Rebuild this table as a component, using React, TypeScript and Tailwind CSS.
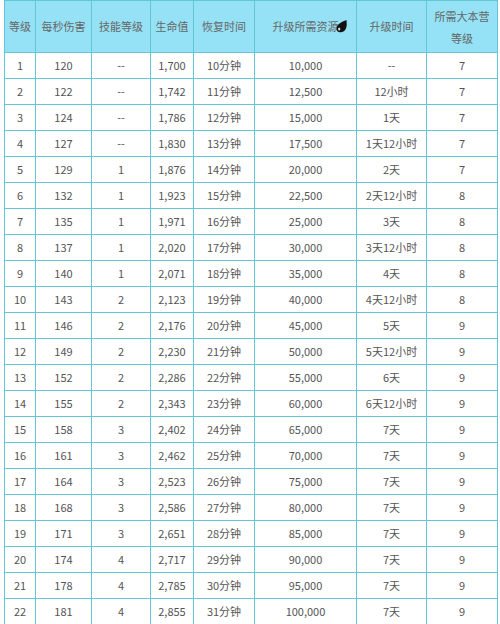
import React from "react";

type Row = [number, number, string, string, string, string, string, number];

const rows: Row[] = [
  [1, 120, "--", "1,700", "10分钟", "10,000", "--", 7],
  [2, 122, "--", "1,742", "11分钟", "12,500", "12小时", 7],
  [3, 124, "--", "1,786", "12分钟", "15,000", "1天", 7],
  [4, 127, "--", "1,830", "13分钟", "17,500", "1天12小时", 7],
  [5, 129, "1", "1,876", "14分钟", "20,000", "2天", 7],
  [6, 132, "1", "1,923", "15分钟", "22,500", "2天12小时", 8],
  [7, 135, "1", "1,971", "16分钟", "25,000", "3天", 8],
  [8, 137, "1", "2,020", "17分钟", "30,000", "3天12小时", 8],
  [9, 140, "1", "2,071", "18分钟", "35,000", "4天", 8],
  [10, 143, "2", "2,123", "19分钟", "40,000", "4天12小时", 8],
  [11, 146, "2", "2,176", "20分钟", "45,000", "5天", 9],
  [12, 149, "2", "2,230", "21分钟", "50,000", "5天12小时", 9],
  [13, 152, "2", "2,286", "22分钟", "55,000", "6天", 9],
  [14, 155, "2", "2,343", "23分钟", "60,000", "6天12小时", 9],
  [15, 158, "3", "2,402", "24分钟", "65,000", "7天", 9],
  [16, 161, "3", "2,462", "25分钟", "70,000", "7天", 9],
  [17, 164, "3", "2,523", "26分钟", "75,000", "7天", 9],
  [18, 168, "3", "2,586", "27分钟", "80,000", "7天", 9],
  [19, 171, "3", "2,651", "28分钟", "85,000", "7天", 9],
  [20, 174, "4", "2,717", "29分钟", "90,000", "7天", 9],
  [21, 178, "4", "2,785", "30分钟", "95,000", "7天", 9],
  [22, 181, "4", "2,855", "31分钟", "100,000", "7天", 9],
];

const widths = ["w-[31px]", "w-[56px]", "w-[59px]", "w-[43px]", "w-[61px]", "w-[102px]", "w-[70px]", "w-[71px]"];

function DarkElixir() {
  return (
    <svg width="13" height="14" viewBox="0 0 13 14" className="absolute -right-[9px] top-[1px]">
      <path d="M11.5 1 C9 2 2 4.5 1.5 9 C1.2 12 3.5 13.5 6 13.3 C9.5 13 11.5 10 11.7 6 C11.8 4 11.6 2.5 11.5 1 Z" fill="#111" />
      <ellipse cx="4.2" cy="10" rx="1.1" ry="1.6" fill="#ddd" />
    </svg>
  );
}

export default function App() {
  const cell = "border border-[#62c6d4] text-center p-0";
  return (
    <div className="w-[500px] h-[624px] overflow-hidden bg-white pl-[4px] font-['Noto_Sans_CJK_SC','Noto_Sans',sans-serif] text-[11px] text-[#555]">
      <table className="border-collapse table-fixed w-[494px]">
        <colgroup>
          {widths.map((w, i) => (
            <col key={i} className={w} />
          ))}
        </colgroup>
        <thead>
          <tr className="h-[52px] bg-[#95e2f6] text-[#666]">
            <th className={`${cell} font-normal`}>等级</th>
            <th className={`${cell} font-normal`}>每秒伤害</th>
            <th className={`${cell} font-normal`}>技能等级</th>
            <th className={`${cell} font-normal`}>生命值</th>
            <th className={`${cell} font-normal`}>恢复时间</th>
            <th className={`${cell} font-normal`}>
              <span className="relative">
                升级所需资源
                <DarkElixir />
              </span>
            </th>
            <th className={`${cell} font-normal`}>升级时间</th>
            <th className={`${cell} font-normal leading-[22px]`}>
              所需大本营
              <br />
              等级
            </th>
          </tr>
        </thead>
        <tbody>
          {rows.map((r) => (
            <tr key={r[0]} className="h-[26px]">
              {r.map((v, i) => (
                <td key={i} className={cell}>
                  {v}
                </td>
              ))}
            </tr>
          ))}
        </tbody>
      </table>
    </div>
  );
}
